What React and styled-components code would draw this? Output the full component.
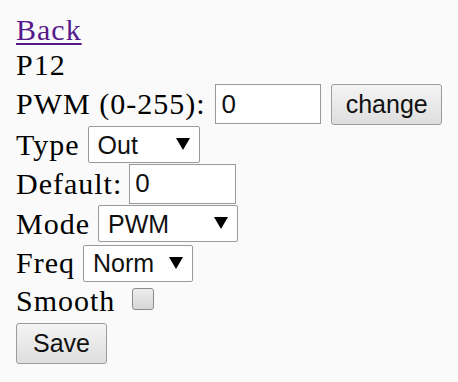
import React from 'react';
import styled, { createGlobalStyle } from 'styled-components';

const GlobalStyle = createGlobalStyle`
  html, body {
    margin: 0;
    padding: 0;
    background: #fafafa;
  }
`;

const Page = styled.div`
  padding: 13px 16px 0 16px;
  font-family: "Liberation Serif", "Times New Roman", serif;
  font-size: 30px;
  letter-spacing: 1px;
  color: #000;
`;

const Row = styled.div`
  display: flex;
  align-items: center;
  height: ${(p) => p.h}px;
  gap: ${(p) => (p.gap != null ? p.gap : 7)}px;
  white-space: nowrap;
`;

const BackLink = styled.a`
  color: #551a8b;
  text-decoration: underline;
  text-decoration-thickness: 2px;
  text-underline-offset: 3px;
`;

const Label = styled.span`
  line-height: 1;
`;

const TextInput = styled.input`
  box-sizing: border-box;
  width: ${(p) => p.w}px;
  height: 40px;
  margin: 0;
  padding: 0 0 0 5px;
  border: 1px solid #9a9a9a;
  background: #fff;
  font-family: "Liberation Sans", Arial, sans-serif;
  font-size: 26px;
  color: #111;
  outline: none;
`;

const Button = styled.button`
  box-sizing: border-box;
  width: ${(p) => p.w}px;
  height: 41px;
  margin: 0 0 0 ${(p) => p.ml || 0}px;
  padding: 0;
  border: 1px solid #9c9c9c;
  border-radius: 3px;
  background: linear-gradient(#f4f4f4, #dedede);
  font-family: "Liberation Sans", Arial, sans-serif;
  font-size: 25px;
  color: #111;
`;

const SelectWrap = styled.div`
  position: relative;
  box-sizing: border-box;
  width: ${(p) => p.w}px;
  height: 37px;
  margin-left: ${(p) => p.ml || 0}px;
`;

const SelectField = styled.select`
  appearance: none;
  -webkit-appearance: none;
  box-sizing: border-box;
  width: 100%;
  height: 100%;
  margin: 0;
  padding: 0 0 0 9px;
  border: 1px solid #9a9a9a;
  border-radius: 2px;
  background: #fff;
  font-family: "Liberation Sans", Arial, sans-serif;
  font-size: 25px;
  color: #111;
  outline: none;
`;

const Arrow = styled.svg`
  position: absolute;
  right: 10px;
  top: 12px;
  pointer-events: none;
`;

const CheckBox = styled.input`
  appearance: none;
  -webkit-appearance: none;
  box-sizing: border-box;
  width: 22px;
  height: 22px;
  margin: 0 0 0 10px;
  border: 1px solid #8a8a8a;
  border-radius: 3px;
  background: linear-gradient(#ededed, #d6d6d6);
  transform: translateY(-2px);
`;

const Select = ({ w, ml, value, options }) => (
  <SelectWrap w={w} ml={ml}>
    <SelectField defaultValue={value}>
      {options.map((o) => (
        <option key={o}>{o}</option>
      ))}
    </SelectField>
    <Arrow width="14" height="12" viewBox="0 0 14 12">
      <polygon points="0,0 14,0 7,12" fill="#000" />
    </Arrow>
  </SelectWrap>
);

export default function App() {
  return (
    <>
      <GlobalStyle />
      <Page>
        <Row h={34}>
          <BackLink href="#">Back</BackLink>
        </Row>
        <Row h={36}>
          <Label>P12</Label>
        </Row>
        <Row h={42} gap={10}>
          <Label>PWM (0-255):</Label>
          <TextInput w={106} defaultValue="0" />
          <Button w={114}>change</Button>
        </Row>
        <Row h={39}>
          <Label>Type</Label>
          <Select w={112} ml={1} value="Out" options={['In', 'Out']} />
        </Row>
        <Row h={39}>
          <Label>Default:</Label>
          <TextInput w={107} defaultValue="0" />
        </Row>
        <Row h={41}>
          <Label>Mode</Label>
          <Select w={140} ml={1} value="PWM" options={['Digital', 'PWM']} />
        </Row>
        <Row h={38}>
          <Label>Freq</Label>
          <Select w={110} ml={1} value="Norm" options={['Low', 'Norm', 'High']} />
        </Row>
        <Row h={38}>
          <Label>Smooth</Label>
          <CheckBox type="checkbox" />
        </Row>
        <Row h={46}>
          <Button w={91}>Save</Button>
        </Row>
      </Page>
    </>
  );
}
